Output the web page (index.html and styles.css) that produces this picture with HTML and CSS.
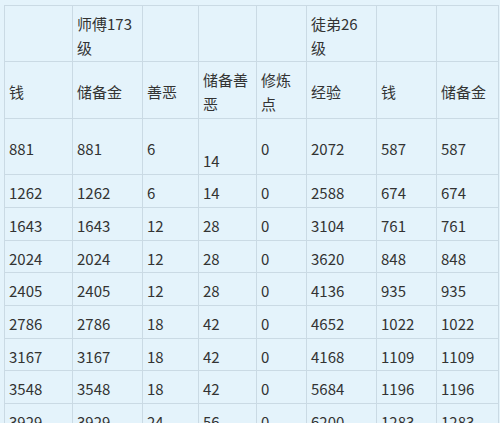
FILE: index.html
```html
<!DOCTYPE html>
<html lang="zh">
<head>
<meta charset="utf-8">
<title>师徒等级表</title>
<link rel="stylesheet" href="styles.css">
</head>
<body>
<table class="grid">
  <colgroup>
    <col class="c1"><col class="c2"><col class="c3"><col class="c4">
    <col class="c5"><col class="c6"><col class="c7"><col class="c8">
  </colgroup>
  <tbody>
    <tr>
      <td></td><td>师傅173<br>级</td><td></td><td></td>
      <td></td><td>徒弟26<br>级</td><td></td><td></td>
    </tr>
    <tr>
      <td>钱</td><td>储备金</td><td>善恶</td><td>储备善<br>恶</td>
      <td>修炼<br>点</td><td>经验</td><td>钱</td><td>储备金</td>
    </tr>
    <tr>
      <td>881</td><td>881</td><td>6</td><td><span class="gap"></span><br>14</td>
      <td>0</td><td>2072</td><td>587</td><td>587</td>
    </tr>
    <tr><td>1262</td><td>1262</td><td>6</td><td>14</td><td>0</td><td>2588</td><td>674</td><td>674</td></tr>
    <tr><td>1643</td><td>1643</td><td>12</td><td>28</td><td>0</td><td>3104</td><td>761</td><td>761</td></tr>
    <tr><td>2024</td><td>2024</td><td>12</td><td>28</td><td>0</td><td>3620</td><td>848</td><td>848</td></tr>
    <tr><td>2405</td><td>2405</td><td>12</td><td>28</td><td>0</td><td>4136</td><td>935</td><td>935</td></tr>
    <tr><td>2786</td><td>2786</td><td>18</td><td>42</td><td>0</td><td>4652</td><td>1022</td><td>1022</td></tr>
    <tr><td>3167</td><td>3167</td><td>18</td><td>42</td><td>0</td><td>4168</td><td>1109</td><td>1109</td></tr>
    <tr><td>3548</td><td>3548</td><td>18</td><td>42</td><td>0</td><td>5684</td><td>1196</td><td>1196</td></tr>
    <tr><td>3929</td><td>3929</td><td>24</td><td>56</td><td>0</td><td>6200</td><td>1283</td><td>1283</td></tr>
  </tbody>
</table>
</body>
</html>
```
FILE: styles.css
```css
html, body {
  margin: 0;
  padding: 0;
  background: #e4f3fb;
  overflow: hidden;
  height: 423px;
}

.grid {
  margin: 5px 0 0 4px;
  width: 494px;
  table-layout: fixed;
  border-collapse: collapse;
  font-family: "Noto Sans CJK SC", "Noto Sans", sans-serif;
  font-size: 15px;
  color: #333;
  background: #e4f3fb;
}

.c1 { width: 68px; }
.c2 { width: 70px; }
.c3 { width: 56px; }
.c4 { width: 58px; }
.c5 { width: 50px; }
.c6 { width: 70px; }
.c7 { width: 60px; }
.c8 { width: 62px; }

.grid td {
  border: 1px solid #cadae4;
  padding: 6px 4px 2px 4px;
  line-height: 23.7px;
  vertical-align: middle;
  text-align: left;
  white-space: nowrap;
  overflow: hidden;
}

.gap {
  display: inline-block;
  height: 1px;
}
```
